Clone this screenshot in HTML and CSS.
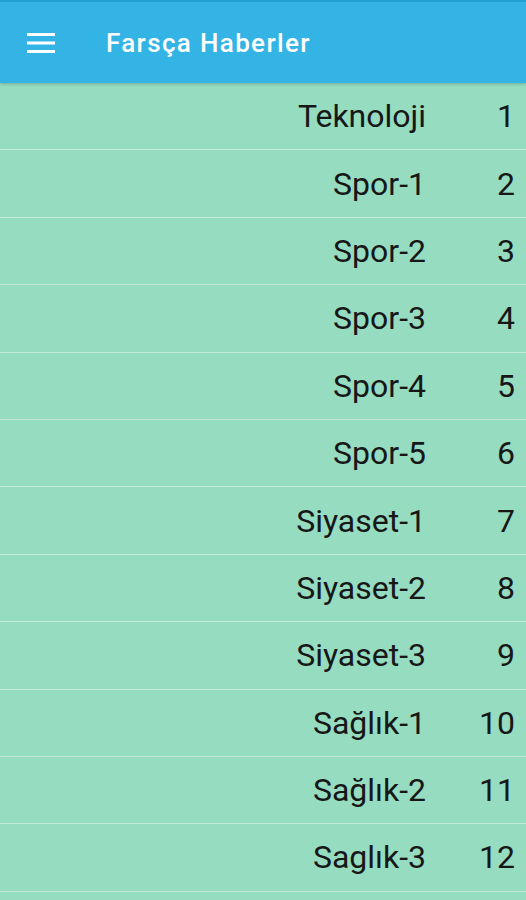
FILE: index.html
```html
<!DOCTYPE html>
<html lang="tr">
<head>
<meta charset="utf-8">
<title>Farsça Haberler</title>
<link rel="stylesheet" href="styles.css">
</head>
<body>
<header class="appbar">
  <div class="status"></div>
  <div class="toolbar">
    <svg class="menu" width="28" height="22" viewBox="0 0 28 22" aria-hidden="true">
      <rect x="0" y="1" width="28" height="3" fill="#fff"/>
      <rect x="0" y="9.5" width="28" height="3" fill="#fff"/>
      <rect x="0" y="18" width="28" height="3" fill="#fff"/>
    </svg>
    <h1 class="title">Farsça Haberler</h1>
  </div>
</header>
<ul class="list">
  <li class="row"><span class="name">Teknoloji</span><span class="num">1</span></li>
  <li class="row"><span class="name">Spor-1</span><span class="num">2</span></li>
  <li class="row"><span class="name">Spor-2</span><span class="num">3</span></li>
  <li class="row"><span class="name">Spor-3</span><span class="num">4</span></li>
  <li class="row"><span class="name">Spor-4</span><span class="num">5</span></li>
  <li class="row"><span class="name">Spor-5</span><span class="num">6</span></li>
  <li class="row"><span class="name">Siyaset-1</span><span class="num">7</span></li>
  <li class="row"><span class="name">Siyaset-2</span><span class="num">8</span></li>
  <li class="row"><span class="name">Siyaset-3</span><span class="num">9</span></li>
  <li class="row"><span class="name">Sağlık-1</span><span class="num">10</span></li>
  <li class="row"><span class="name">Sağlık-2</span><span class="num">11</span></li>
  <li class="row"><span class="name">Saglık-3</span><span class="num">12</span></li>
  <li class="row"><span class="name"></span><span class="num"></span></li>
</ul>
</body>
</html>
```
FILE: styles.css
```css
* { box-sizing: border-box; }
html, body { margin: 0; padding: 0; }
body {
  width: 526px;
  height: 900px;
  overflow: hidden;
  background: #95dcc0;
  font-family: Roboto, "Noto Sans", sans-serif;
}
.appbar {
  position: relative;
  z-index: 1;
  box-shadow: 0 1px 3px rgba(0, 0, 0, 0.22);
}
.status {
  height: 2px;
  background: #1f9fd2;
}
.toolbar {
  height: 81px;
  background: #34b4e5;
  display: flex;
  align-items: center;
  padding-left: 27px;
}
.menu { display: block; margin-top: 1px; }
.title {
  margin: 0 0 0 51px;
  color: #fff;
  font-size: 26px;
  font-weight: 500;
  letter-spacing: 1.35px;
}
.list {
  list-style: none;
  margin: 0;
  padding: 0;
}
.row {
  height: 67.4px;
  display: flex;
  justify-content: flex-end;
  align-items: center;
  padding-right: 11px;
  border-bottom: 1.6px solid #c3eada;
  color: #171717;
  font-size: 32px;
}
.name { text-align: right; }
.num { width: 89px; text-align: right; }
```
